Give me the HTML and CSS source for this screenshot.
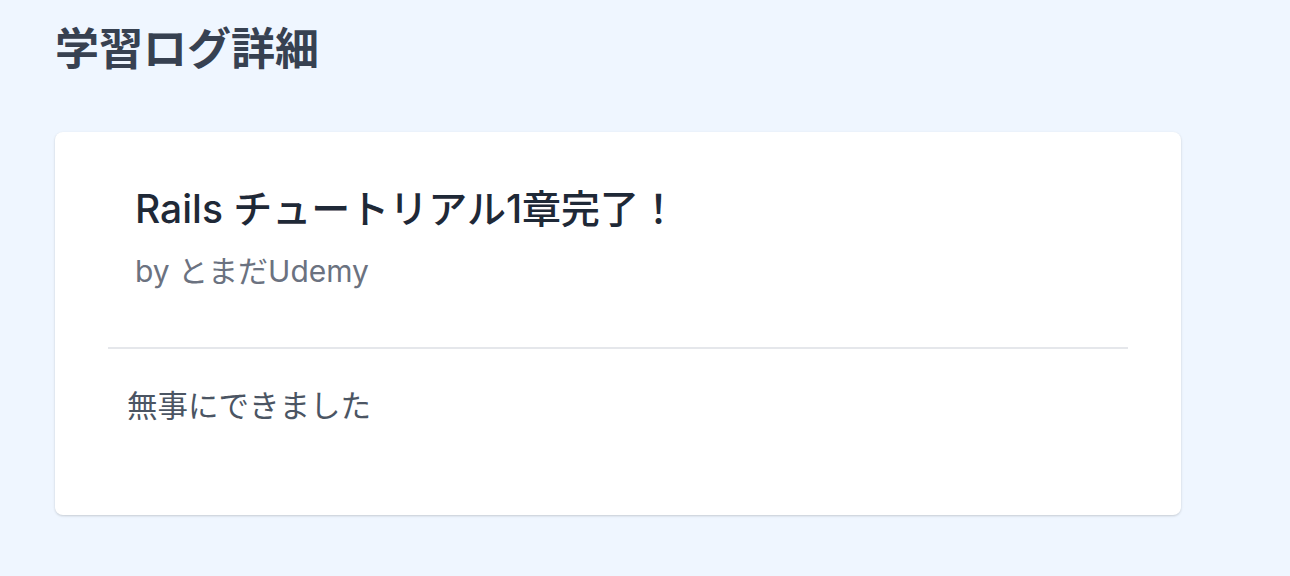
FILE: index.html
```html
<!DOCTYPE html>
<html lang="ja">
<head>
<meta charset="utf-8">
<title>学習ログ詳細</title>
<link rel="stylesheet" href="styles.css">
</head>
<body>
<main class="page">
  <h1 class="page-title">学習ログ詳細</h1>
  <section class="card">
    <header class="card-header">
      <h2 class="log-title">Rails チュートリアル1章完了！</h2>
      <p class="log-author">by とまだUdemy</p>
    </header>
    <div class="card-body">
      <p class="log-content">無事にできました</p>
    </div>
  </section>
</main>
</body>
</html>
```
FILE: styles.css
```css
html, body {
  margin: 0;
  padding: 0;
}
body {
  background: #eff6ff;
  font-family: Inter, "Noto Sans CJK JP", "Noto Sans", sans-serif;
  width: 1290px;
  height: 576px;
  overflow: hidden;
}
.page {
  padding: 21px 0 0 55px;
}
.page-title {
  margin: 0;
  font-size: 44px;
  line-height: 56px;
  font-weight: 700;
  color: #374151;
}
.card {
  margin-top: 55px;
  width: 1126px;
  box-sizing: border-box;
  background: #ffffff;
  border-radius: 8px;
  box-shadow: 0 1px 3px rgba(0, 0, 0, 0.12), 0 1px 2px rgba(0, 0, 0, 0.06);
  padding: 0 53px;
}
.card-header {
  padding: 53px 27px 56px;
  border-bottom: 2px solid #e5e7eb;
}
.log-title {
  margin: 0;
  font-size: 39px;
  line-height: 48px;
  font-weight: 500;
  color: #1f2937;
}
.log-author {
  margin: 18px 0 0;
  font-size: 30px;
  line-height: 40px;
  color: #6b7280;
}
.card-body {
  padding: 37px 19px 89px;
}
.log-content {
  margin: 0;
  font-size: 30.5px;
  line-height: 40px;
  color: #4b5563;
}
```
